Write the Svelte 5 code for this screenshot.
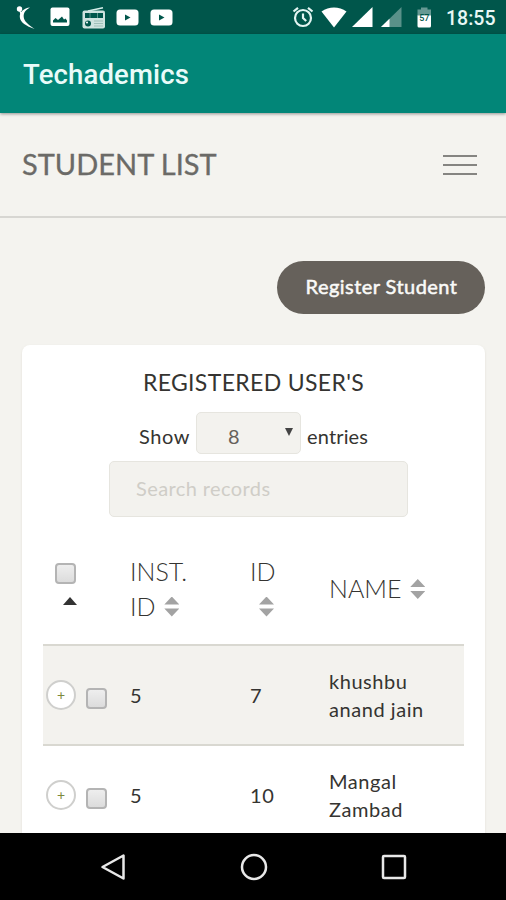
<script>
	const students = [
		{ inst: 5, id: 7, name: ['khushbu', 'anand jain'] },
		{ inst: 5, id: 10, name: ['Mangal', 'Zambad'] },
	];

	let search = '';
</script>

<div class="screen">
	<div class="status">
		<div class="notifications">
			<svg class="swoosh" width="20" height="24" viewBox="0 0 20 24">
				<circle cx="3.5" cy="4" r="2.7" />
				<path d="M14 2.5C8 3 3.5 7 3.8 12c.3 5.500 6.500 9 14.700 12C12 19 8 16.500 7.700 12 7.400 7.800 9.500 5 14 2.500z" />
				<path d="M3 5l4 3-2 3z" />
			</svg>
			<svg class="photo" width="20" height="20" viewBox="0 0 20 20">
				<rect x="0.500" y="0.500" width="19" height="18.500" rx="2" />
				<path class="cut" d="M3 15.500v-2l2.500-2.500 2.500 2 4-3.500 2 3 1.500-1 1.500 2v2z" />
			</svg>
			<svg class="radio" width="24" height="22" viewBox="0 0 24 22">
				<path d="M6 4L21 0.800" stroke="#d6efeb" stroke-width="1.500" />
				<rect x="0.500" y="3.500" width="22.500" height="18" rx="2" fill="#cfe3df" />
				<path class="cut" d="M3 6h18v5H3z" />
				<path d="M15.500 6v5M8 6v5" stroke="#5b938a" />
				<circle class="cut" cx="6" cy="16.500" r="3" />
				<circle cx="5" cy="15.500" r="1" />
				<path d="M12 14h9M12 16.500h9M12 19h9" stroke="#9fbfb9" />
			</svg>
			<svg class="tube" width="23" height="17" viewBox="0 0 23 17">
				<rect x="0.500" y="0.500" width="22" height="16" rx="3.500" />
				<path class="cut" d="M9 5.500v6l5.500-3z" />
			</svg>
			<svg class="tube" width="23" height="17" viewBox="0 0 23 17">
				<rect x="0.500" y="0.500" width="22" height="16" rx="3.500" />
				<path class="cut" d="M9 5.500v6l5.500-3z" />
			</svg>
		</div>
		<div class="system">
			<svg class="alarm" width="22" height="22" viewBox="0 0 22 22" fill="none" stroke="#e3f5f2" stroke-width="2.2">
				<circle cx="11" cy="12" r="8" />
				<path d="M11 7.500V12l3.200 3M1.500 5.500L6 1.800M20.500 5.500L16 1.800" />
			</svg>
			<svg class="wifi" width="26" height="21" viewBox="0 0 26 21">
				<path d="M0.500 4.500C8 -1 18 -1 25.500 4.500L13 20.500z" />
			</svg>
			<svg class="signal" width="21" height="20" viewBox="0 0 21 20">
				<path d="M20.500 0v20H0z" />
			</svg>
			<svg class="signal two" width="21" height="20" viewBox="0 0 21 20">
				<path d="M20.500 0v20H0z" opacity="0.350" />
				<path d="M8.500 11.700V20H0z" />
			</svg>
			<svg class="battery" width="15" height="21" viewBox="0 0 15 21">
				<path d="M4 2.500V0.500h6.500v2H14V9H0.500V2.500z" opacity="0.400" />
				<path d="M0.500 8.500H14v10.500q0 1.500-1.500 1.500H2q-1.500 0-1.500-1.500z" />
				<text x="7.300" y="14">57</text>
			</svg>
			<span class="clock">18:55</span>
		</div>
	</div>

	<div class="appbar">Techademics</div>

	<header>
		<h1>STUDENT LIST</h1>
		<button class="menu" aria-label="Menu">
			<span></span>
			<span></span>
			<span></span>
		</button>
	</header>

	<main>
		<button class="register">Register Student</button>

		<section class="card">
			<h2>REGISTERED USER'S</h2>

			<div class="length">
				<span class="show">Show</span>
				<div class="select"><span>8</span><i></i></div>
				<span class="entries">entries</span>
			</div>
			<input class="search" type="text" placeholder="Search records" bind:value={search} />

			<table>
				<thead>
					<tr>
						<th class="pick">
							<span class="check"></span>
							<span class="asc"></span>
						</th>
						<th class="inst">INST.<br />ID <span class="sort"></span></th>
						<th class="id">ID<br /><span class="sort"></span></th>
						<th class="name">NAME <span class="sort"></span></th>
					</tr>
				</thead>
				<tbody>
					{#each students as student}
						<tr>
							<td class="pick">
								<div class="controls">
									<span class="expand">+</span>
									<span class="check"></span>
								</div>
							</td>
							<td>{student.inst}</td>
							<td>{student.id}</td>
							<td>{student.name[0]}<br />{student.name[1]}</td>
						</tr>
					{/each}
				</tbody>
			</table>
		</section>
	</main>

	<nav>
		<svg width="26" height="28" viewBox="0 0 26 28">
			<path d="M23.500 2.500v23L2.500 14z" />
		</svg>
		<svg width="28" height="28" viewBox="0 0 28 28">
			<circle cx="14" cy="14" r="12" />
		</svg>
		<svg width="26" height="26" viewBox="0 0 26 26">
			<rect x="2" y="2" width="22" height="22" rx="1" />
		</svg>
	</nav>
</div>

<style>
	:global(body) {
		background: #f4f3ef;
	}

	.screen {
		display: flex;
		flex-direction: column;
		width: 506px;
		height: 900px;
		overflow: hidden;
		background: #f4f3ef;
		color: #353431;
		font-family: Lato, "Open Sans", sans-serif;
	}

	button {
		border: 0;
		font-family: inherit;
		cursor: pointer;
	}

	/* Status bar */

	.status {
		display: flex;
		flex: none;
		justify-content: space-between;
		height: 34px;
		background: #00564b;
	}

	.status svg {
		fill: #fff;
	}

	.status .cut {
		fill: #00564b;
	}

	.notifications,
	.system {
		display: flex;
		align-items: center;
	}

	.notifications {
		padding-left: 16px;
	}

	.photo {
		margin-left: 14px;
	}

	.radio {
		margin: 2px 10px 0 12px;
	}

	.tube + .tube {
		margin-left: 11px;
	}

	.system {
		padding-right: 10px;
	}

	.status .alarm {
		fill: none;
	}

	.wifi {
		margin-left: 7px;
	}

	.signal {
		margin-left: 5px;
	}

	.signal.two {
		margin-left: 8px;
	}

	.battery {
		margin-left: 15px;
	}

	.battery text {
		fill: #00564b;
		font: 500 9px Roboto, sans-serif;
		text-anchor: middle;
	}

	.clock {
		width: 50px;
		margin: 2px 0 0 14px;
		color: #e9f8f6;
		font: 500 19.5px Roboto, sans-serif;
	}

	.appbar {
		z-index: 1;
		flex: none;
		height: 79px;
		padding-left: 23px;
		background: #028678;
		box-shadow: 0 1px 3px rgba(0, 0, 0, 0.4);
		color: #e9fbf9;
		font: 500 27.5px/82px Roboto, sans-serif;
		letter-spacing: 0.15px;
		box-sizing: border-box;
	}

	/* Page header */

	header {
		display: flex;
		flex: none;
		align-items: center;
		justify-content: space-between;
		height: 105px;
		padding: 0 29px 0 22px;
		border-bottom: 2px solid #d7d6d2;
		box-sizing: border-box;
	}

	h1 {
		margin: 0 0 2px;
		color: #6b6a67;
		font-size: 29px;
		font-weight: 400;
		-webkit-text-stroke: 0.3px #6b6a67;
	}

	.menu {
		display: flex;
		flex-direction: column;
		gap: 7px;
		width: 34px;
		padding: 0;
		background: none;
	}

	.menu span {
		height: 2px;
		background: #858481;
	}

	/* Content */

	main {
		display: flex;
		flex: 1;
		flex-direction: column;
		min-height: 0;
		padding: 43px 21px 0 22px;
		overflow: hidden;
	}

	.register {
		flex: none;
		align-self: flex-end;
		width: 208px;
		height: 53px;
		padding: 0 0 3px 1px;
		border-radius: 27px;
		background: #66615b;
		color: #fafaf8;
		font-size: 20px;
		letter-spacing: 0.45px;
		-webkit-text-stroke: 0.5px #fafaf8;
	}

	.card {
		flex: none;
		height: 600px;
		margin-top: 31px;
		padding: 0 21px;
		border-radius: 8px;
		background: #fff;
		box-shadow: 0 1px 2px rgba(204, 197, 185, 0.5);
	}

	h2 {
		margin: 0;
		padding-top: 22px;
		font-size: 23px;
		font-weight: 400;
		letter-spacing: 0.35px;
		line-height: 30px;
		text-align: center;
	}

	.length {
		display: flex;
		height: 42px;
		margin: 15px 0 7px 96px;
		font-size: 20px;
		line-height: 49px;
	}

	.show {
		width: 57px;
		letter-spacing: 0.6px;
	}

	.entries {
		margin-left: 6px;
		letter-spacing: 0.15px;
	}

	.select,
	.search {
		border: 1px solid #e6e5df;
		border-radius: 5px;
		background: #f3f2ee;
		box-sizing: border-box;
	}

	.select {
		display: flex;
		justify-content: space-between;
		width: 105px;
		padding: 0 7px 0 31px;
		color: #66615b;
		line-height: 47px;
	}

	.select i {
		width: 0;
		height: 0;
		margin-top: 15px;
		border: 4.5px solid transparent;
		border-top: 8px solid #444;
		border-bottom: 0;
	}

	.search {
		display: block;
		width: 299px;
		height: 56px;
		margin: 0 0 0 66px;
		padding: 0 26px 2px;
		font-family: inherit;
		font-size: 20px;
		letter-spacing: 0.4px;
	}

	.search::placeholder {
		color: #cfcdc7;
	}

	/* Table */

	table {
		width: 421px;
		margin-top: 16px;
		border-collapse: collapse;
		table-layout: fixed;
	}

	th,
	td {
		padding: 0 0 0 8px;
		text-align: left;
		vertical-align: middle;
	}

	th {
		height: 111px;
		font-size: 25px;
		font-weight: 300;
		line-height: 35px;
	}

	th.pick,
	th.id {
		width: 71px;
	}

	th.inst {
		width: 112px;
	}

	td {
		height: 98px;
		border-top: 2px solid #d9d8d1;
		font-size: 20px;
		letter-spacing: 0.55px;
		line-height: 28px;
	}

	tbody tr:nth-child(odd) {
		background: #f3f2ee;
	}

	.check {
		display: block;
		width: 21px;
		height: 21px;
		border: 2px solid #b4b4b4;
		border-radius: 4px;
		background: linear-gradient(#eee, #dcdcdc);
		box-sizing: border-box;
	}

	th.pick {
		height: 101px;
		padding-bottom: 10px;
	}

	th .check {
		margin: 1px 0 0 4px;
	}

	.asc {
		display: block;
		width: 0;
		margin: 13px 0 0 12px;
		border: 8px solid transparent;
		border-width: 0 7.5px 8px;
		border-bottom-color: #333;
	}

	.sort {
		display: inline-block;
		width: 15px;
		height: 20px;
		margin-left: 2px;
		background: #a3a3a3;
		clip-path: polygon(50% 0, 100% 40%, 0 40%, 50% 0, 50% 100%, 0 60%, 100% 60%, 50% 100%);
		vertical-align: -1px;
	}

	.id .sort {
		margin-left: 9px;
	}

	td.pick {
		padding-left: 3px;
	}

	.controls {
		display: flex;
		align-items: center;
		gap: 10px;
	}

	.expand {
		width: 30px;
		height: 30px;
		border: 2px solid #cfcfcd;
		border-radius: 50%;
		background: #fff;
		box-sizing: border-box;
		color: #7b8a3c;
		font-size: 14px;
		letter-spacing: 0;
		line-height: 25px;
		text-align: center;
	}

	.controls .check {
		margin-top: 6px;
	}

	/* Navigation bar */

	nav {
		display: flex;
		flex: none;
		align-items: center;
		justify-content: space-between;
		height: 67px;
		padding: 0 99px 0 100px;
		background: #000;
		box-sizing: border-box;
	}

	nav svg {
		fill: none;
		stroke: #e8e8e8;
		stroke-width: 2.5;
		stroke-linejoin: round;
	}
</style>
